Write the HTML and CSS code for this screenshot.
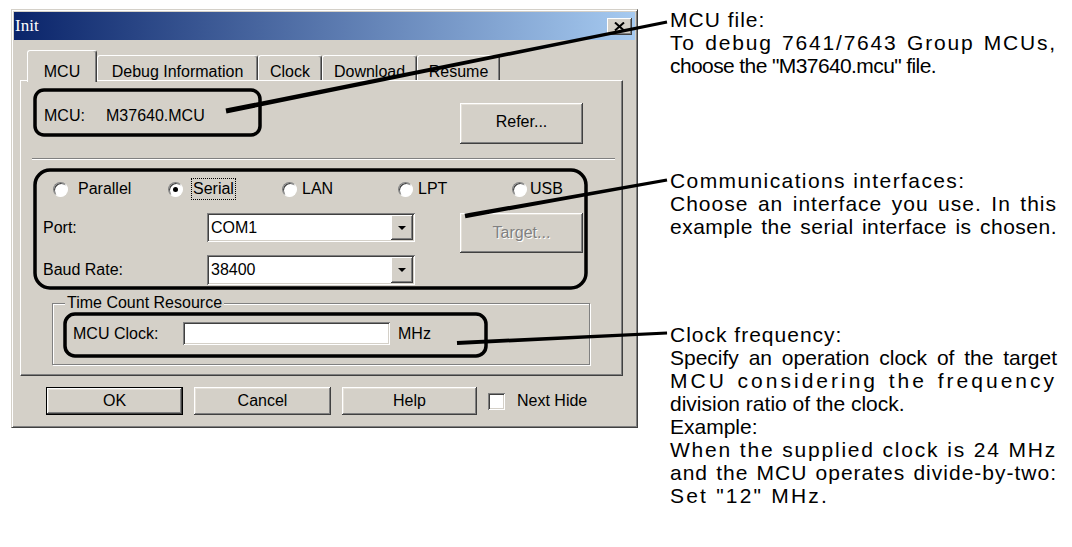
FILE: index.html
```html
<!DOCTYPE html>
<html lang="en">
<head>
<meta charset="utf-8">
<title>Init</title>
<link rel="stylesheet" href="styles.css">
</head>
<body>
<div class="page">
  <div class="dialog">
    <div class="titlebar">
      <span class="title">Init</span>
      <span class="close"><svg width="11" height="9" viewBox="0 0 11 9"><path d="M1 0.5 L10 8.5 M10 0.5 L1 8.5" stroke="#000" stroke-width="2" fill="none"/></svg></span>
    </div>
    <div class="tabs">
      <div class="tab active t-mcu">MCU</div>
      <div class="tab t-debug">Debug Information</div>
      <div class="tab t-clock">Clock</div>
      <div class="tab t-download">Download</div>
      <div class="tab t-resume">Resume</div>
    </div>
    <div class="panel">
      <div class="mcu-row">
        <span class="mcu-label">MCU:</span>
        <span class="mcu-value">M37640.MCU</span>
        <span class="btn refer">Refer...</span>
      </div>
      <div class="sep"></div>
      <div class="radios">
        <span class="radio"><span class="rdot"></span><span>Parallel</span></span>
        <span class="radio focus-item"><span class="rdot checked"></span><span class="focus">Serial</span></span>
        <span class="radio tight"><span class="rdot"></span><span>LAN</span></span>
        <span class="radio tight"><span class="rdot"></span><span>LPT</span></span>
        <span class="radio tighter"><span class="rdot"></span><span>USB</span></span>
      </div>
      <div class="comm">
        <span class="lbl">Port:</span>
        <div class="combo"><span class="combo-text">COM1</span><span class="combo-btn"><svg width="8" height="4" viewBox="0 0 8 4"><polygon points="0,0 8,0 4,4" fill="#000"/></svg></span></div>
        <span class="btn target">Target...</span>
        <span class="lbl">Baud Rate:</span>
        <div class="combo"><span class="combo-text">38400</span><span class="combo-btn"><svg width="8" height="4" viewBox="0 0 8 4"><polygon points="0,0 8,0 4,4" fill="#000"/></svg></span></div>
      </div>
      <fieldset class="group">
        <legend>Time Count Resource</legend>
        <div class="clock-row">
          <span class="clock-label">MCU Clock:</span>
          <span class="field"></span>
          <span class="unit">MHz</span>
        </div>
      </fieldset>
    </div>
    <div class="buttons">
      <span class="btn push default">OK</span>
      <span class="btn push">Cancel</span>
      <span class="btn push help">Help</span>
      <span class="check"><span class="cbox"></span><span>Next Hide</span></span>
    </div>
  </div>

  <div class="notes">
    <div class="note note-mcu">
      <div class="line">MCU file:</div>
      <div class="line full ls-wide">To debug 7641/7643 Group MCUs,</div>
      <div class="line ls-neg">choose the "M37640.mcu" file.</div>
    </div>
    <div class="note note-comm">
      <div class="line ls-more">Communications interfaces:</div>
      <div class="line full">Choose an interface you use. In this</div>
      <div class="line full ls-half">example the serial interface is chosen.</div>
    </div>
    <div class="note note-clock">
      <div class="line">Clock frequency:</div>
      <div class="line full ls-none">Specify an operation clock of the target</div>
      <div class="line full ls-xwide">MCU considering the frequency</div>
      <div class="line ls-none">division ratio of the clock.</div>
      <div class="line ls-none">Example:</div>
      <div class="line full ls-wide">When the supplied clock is 24 MHz</div>
      <div class="line full">and the MCU operates divide-by-two:</div>
      <div class="line ls-set">Set "12" MHz.</div>
    </div>
  </div>

  <svg class="callouts" width="1072" height="547" viewBox="0 0 1072 547">
    <g fill="none" stroke="#000" stroke-width="3.5">
      <rect x="35" y="90" width="225" height="45" rx="9"/>
      <rect x="35" y="170" width="551" height="118" rx="15"/>
      <rect x="65" y="314" width="421" height="42" rx="10"/>
    </g>
    <g fill="#000">
      <polygon points="225.5,108.6 666.7,20.5 667.3,23.5 226.5,113.4"/>
      <polygon points="464.6,213.8 666.7,178.5 667.3,181.5 465.4,218.2"/>
      <polygon points="456.9,341 667,331.5 667.1,334.5 457.1,345"/>
    </g>
  </svg>
</div>
</body>
</html>
```

FILE: styles.css
```css
* { box-sizing: border-box; }

html, body {
  margin: 0;
  padding: 0;
  background: #ffffff;
}

body {
  font-family: "Liberation Sans", Arial, sans-serif;
}

.page {
  position: relative;
  width: 1072px;
  height: 547px;
  display: flex;
  align-items: flex-start;
  overflow: hidden;
}

/* ---------- dialog ---------- */
.dialog {
  margin: 9px 0 0 11px;
  width: 627px;
  height: 419px;
  flex: none;
  display: flex;
  flex-direction: column;
  padding: 2px;
  background: #d4d0c8;
  border: 1px solid;
  border-color: #d4d0c8 #404040 #404040 #d4d0c8;
  box-shadow: inset 1px 1px #ffffff, inset -1px -1px #808080;
  font-size: 16px;
  color: #000;
}

.titlebar {
  flex: none;
  height: 28px;
  display: flex;
  align-items: center;
  justify-content: space-between;
  padding: 0 3px 0 1px;
  background: linear-gradient(to right, #0a246a, #a6caf0);
}

.title {
  color: #ffffff;
  font-family: "Liberation Serif", serif;
  font-size: 17px;
  line-height: 20px;
}

.close {
  width: 25px;
  height: 17px;
  display: flex;
  align-items: center;
  justify-content: center;
  background: #d4d0c8;
  box-shadow: inset -1px -1px #404040, inset 1px 1px #ffffff, inset -2px -2px #808080;
}

/* ---------- tabs ---------- */
.tabs {
  flex: none;
  display: flex;
  align-items: flex-end;
  height: 30px;
  margin-top: 10px;
  padding-left: 13px;
}

.tab {
  height: 25px;
  padding-top: 8px;
  line-height: 16px;
  text-align: center;
  white-space: nowrap;
  background: #d4d0c8;
  border-top: 1px solid #ffffff;
  border-left: 1px solid #ffffff;
  border-right: 1px solid #404040;
  border-radius: 3px 3px 0 0;
  box-shadow: inset -1px 0 #808080;
}

.tab.active {
  height: 32px;
  padding-top: 13px;
  margin-bottom: -2px;
  position: relative;
  z-index: 1;
}

.t-mcu { width: 70px; }
.t-debug { width: 161px; }
.t-clock { width: 64px; }
.t-download { width: 95px; }
.t-resume { width: 83px; }

/* ---------- panel ---------- */
.panel {
  flex: none;
  margin-left: 6px;
  width: 603px;
  height: 296px;
  border: 1px solid;
  border-color: #ffffff #404040 #404040 #ffffff;
  box-shadow: inset -1px -1px #808080;
}

.btn {
  display: flex;
  align-items: center;
  justify-content: center;
  background: #d4d0c8;
  box-shadow: inset -1px -1px #404040, inset 1px 1px #ffffff, inset -2px -2px #808080, inset 2px 2px #e4e0d8;
  line-height: 16px;
  white-space: nowrap;
}

.mcu-row {
  display: flex;
  align-items: flex-start;
  height: 41px;
  margin-top: 22px;
  padding-left: 23px;
  padding-right: 39px;
}

.mcu-label {
  width: 62px;
  margin-top: 5px;
  line-height: 16px;
}

.mcu-value {
  margin-top: 5px;
  line-height: 16px;
}

.refer {
  margin-left: auto;
  width: 123px;
  height: 41px;
  padding-bottom: 4px;
}

.sep {
  height: 2px;
  margin: 14px 7px 0 11px;
  border-top: 1px solid #808080;
  border-bottom: 1px solid #ffffff;
}

/* radios */
.radios {
  display: grid;
  grid-template-columns: 115px 114px 116px 114px auto;
  align-items: center;
  height: 22px;
  margin-top: 18px;
  padding-left: 32px;
}

.radio {
  display: flex;
  align-items: center;
  gap: 10px;
  line-height: 16px;
}

.radio.focus-item { gap: 8px; }
.radio.tight { gap: 5px; }
.radio.tighter { gap: 3px; }

.rdot {
  width: 15px;
  height: 15px;
  flex: none;
  border-radius: 50%;
  background: #ffffff;
  border: 1px solid;
  border-color: #808080 #ffffff #ffffff #808080;
  box-shadow: inset 1px 1px #404040;
  display: flex;
  align-items: center;
  justify-content: center;
}

.rdot.checked::after {
  content: "";
  width: 5px;
  height: 5px;
  border-radius: 50%;
  background: #000;
}

.focus {
  padding: 2px 1px;
  border: 1px dotted #000;
}

/* port / baud */
.comm {
  display: grid;
  grid-template-columns: 164px 208px 45px 123px;
  grid-template-rows: 29px 30px;
  row-gap: 13px;
  margin-top: 13px;
  padding-left: 22px;
}

.lbl {
  grid-column: 1;
  align-self: center;
  line-height: 16px;
}

.combo {
  grid-column: 2;
  display: flex;
  align-items: stretch;
  padding: 2px;
  background: #ffffff;
  box-shadow: inset 1px 1px #808080, inset -1px -1px #ffffff, inset 2px 2px #404040, inset -2px -2px #d4d0c8;
}

.combo-text {
  flex: 1;
  align-self: center;
  padding-left: 2px;
  line-height: 16px;
}

.combo-btn {
  width: 22px;
  display: flex;
  align-items: center;
  justify-content: center;
  background: #d4d0c8;
  box-shadow: inset -1px -1px #404040, inset 1px 1px #ffffff, inset -2px -2px #808080;
}

.target {
  grid-column: 4;
  grid-row: 1 / 3;
  align-self: start;
  height: 40px;
  color: #808080;
  text-shadow: 1px 1px #ffffff;
}

/* group */
.group {
  margin: 10px 32px 0 31px;
  padding: 0 0 19px 0;
  min-inline-size: 0;
  border: 1px solid #808080;
  box-shadow: inset 1px 1px #ffffff, 1px 1px #ffffff;
}

.group legend {
  margin-left: 12px;
  padding: 0 2px;
  line-height: 16px;
  background: #d4d0c8;
}

.clock-row {
  display: flex;
  align-items: center;
  height: 23px;
  margin-top: 11px;
  padding-left: 20px;
}

.clock-label {
  width: 110px;
  line-height: 16px;
}

.field {
  width: 207px;
  height: 23px;
  background: #ffffff;
  box-shadow: inset 1px 1px #808080, inset -1px -1px #ffffff, inset 2px 2px #404040, inset -2px -2px #d4d0c8;
}

.unit {
  margin-left: 8px;
  line-height: 16px;
}

/* bottom buttons */
.buttons {
  flex: none;
  display: flex;
  align-items: center;
  gap: 11px;
  height: 28px;
  margin-top: 11px;
  padding-left: 32px;
}

.push {
  width: 137px;
  height: 28px;
}

.push.help { width: 135px; }

.push.default {
  border: 1px solid #000;
}

.check {
  display: flex;
  align-items: center;
  gap: 12px;
  line-height: 16px;
}

.cbox {
  width: 17px;
  height: 17px;
  background: #ffffff;
  box-shadow: inset 1px 1px #808080, inset -1px -1px #ffffff, inset 2px 2px #404040, inset -2px -2px #d4d0c8;
}

/* ---------- notes ---------- */
.notes {
  flex: none;
  margin-left: 32px;
  width: 387px;
  font-size: 21px;
  line-height: 23px;
  letter-spacing: 1px;
  color: #000;
}

.note-mcu { margin-top: 8px; }
.note-comm { margin-top: 92px; }
.note-clock { margin-top: 85px; }

.line { white-space: nowrap; }

.full {
  text-align: justify;
  text-align-last: justify;
}

.ls-neg { letter-spacing: -0.6px; }
.ls-none { letter-spacing: 0; }
.ls-half { letter-spacing: 0.5px; }
.ls-more { letter-spacing: 1.4px; }
.ls-wide { letter-spacing: 1.8px; }
.ls-set { letter-spacing: 2.2px; }
.ls-xwide { letter-spacing: 3px; }

/* ---------- callouts overlay ---------- */
.callouts {
  position: absolute;
  left: 0;
  top: 0;
  pointer-events: none;
}
```
